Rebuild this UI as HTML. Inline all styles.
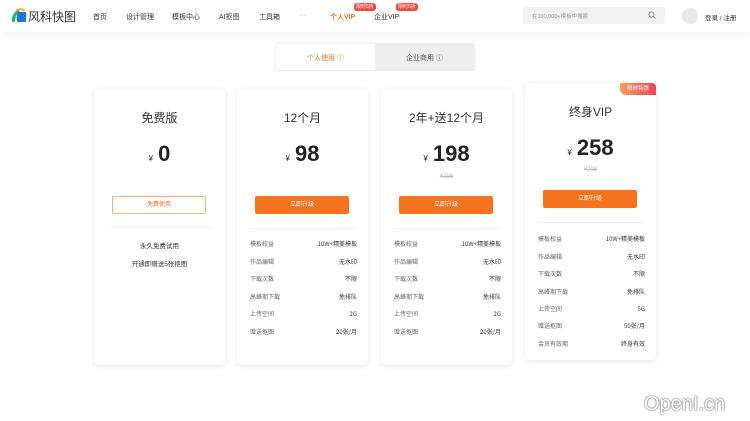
<!DOCTYPE html>
<html><head><meta charset="utf-8"><style>
*{margin:0;padding:0;box-sizing:border-box}
body{width:750px;height:421px;background:#fff;font-family:"Liberation Sans","Noto Sans CJK SC",sans-serif;position:relative;overflow:hidden;color:#333}
.a{position:absolute}
.hdr{left:0;top:0;width:750px;height:32px;background:#fff;box-shadow:0 2px 6px rgba(0,0,0,.06)}
.nav{font-size:7px;color:#333;top:12px}
.tag{font-size:5px;color:#fff;background:#f04a3a;border-radius:3px;padding:0 2px;height:8px;line-height:8px;top:3px}
.card{background:#fff;border-radius:4px;box-shadow:0 1px 6px rgba(0,0,0,.1);width:131px}
.t{width:131px;text-align:center;font-size:12px;color:#333}
.p{width:131px;text-align:center;font-size:22px;font-weight:bold;color:#222}
.p small{font-size:8px;font-weight:normal;margin-right:5px}
.s{width:131px;text-align:center;font-size:6px;color:#bbb;text-decoration:line-through}
.btn{width:94px;height:18px;background:#f5731e;color:#fff;font-size:6px;text-align:center;line-height:18px;border-radius:2px;left:18px}
.sep{left:12px;width:107px;height:1px;background:#f0f0f0}
.row{left:13px;width:107px;height:10px;font-size:6px;line-height:10px;color:#666}
.row span{position:absolute;left:0;top:0;font-family:"Noto Sans CJK SC",sans-serif}
.row b{position:absolute;right:0;top:0;font-weight:normal;color:#333;font-family:"Noto Sans CJK SC",sans-serif}
</style></head><body>
<div class="a hdr"></div>
<svg class="a" style="left:9px;top:7px" width="18" height="16" viewBox="0 0 18 16"><path d="M3 15 Q2 7 9 3 L11 4 Q6 8 6 15Z" fill="#2fb36b"/><path d="M9 5 L17 5 L17 15 L8 15 Q7 9 9 5Z" fill="#1f7ad6"/><path d="M6 3 Q10 0 16 2 L15 4 Q11 2 8 4Z" fill="#f5a623"/></svg>
<div class="a" style="left:28px;top:8px;font-size:12px;color:#333">风科快图</div>
<div class="a nav" style="left:93px">首页</div>
<div class="a nav" style="left:126px">设计管理</div>
<div class="a nav" style="left:172px">模板中心</div>
<div class="a nav" style="left:219px">AI抠图</div>
<div class="a nav" style="left:259px">工具箱</div>
<div class="a nav" style="left:299px;color:#888">···</div>
<div class="a nav" style="left:330px;color:#f5731e;font-weight:bold">个人VIP</div>
<div class="a nav" style="left:374px">企业VIP</div>
<div class="a tag" style="left:354px">限时5折</div>
<div class="a tag" style="left:396px">限时5折</div>
<div class="a" style="left:523px;top:7px;width:142px;height:17px;background:#f2f2f2;border-radius:2px"></div>
<div class="a" style="left:532px;top:12px;font-size:5.5px;color:#999">在100,000+模板中搜索</div>
<svg class="a" style="left:648px;top:11px" width="8" height="8" viewBox="0 0 8 8"><circle cx="3.5" cy="3.5" r="2.6" fill="none" stroke="#777" stroke-width=".8"/><path d="M5.5 5.5 L7.5 7.5" stroke="#777" stroke-width=".8"/></svg>
<div class="a" style="left:682px;top:8px;width:16px;height:16px;border-radius:50%;background:#e9e9e9"></div>
<div class="a" style="left:705px;top:12px;font-size:6.5px;color:#333">登录 / 注册</div>
<div class="a" style="left:275px;top:43px;width:200px;height:28px;background:#eee;border-radius:2px"></div>
<div class="a" style="left:276px;top:44px;width:99px;height:26px;background:#fff"></div>
<div class="a" style="left:276px;top:53px;width:99px;text-align:center;font-size:7px;color:#f5731e">个人使用 ⓘ</div>
<div class="a" style="left:375px;top:53px;width:99px;text-align:center;font-size:7px;color:#555">企业商用 ⓘ</div>

<div class="a card" style="left:94px;top:89px;height:276px"></div>
<div class="a t" style="left:94px;top:109px">免费版</div>
<div class="a p" style="left:94px;top:141px"><small>¥</small>0</div>
<div class="a btn" style="left:112px;top:196px;background:#fff;color:#f5731e;border:1px solid #f5b07f;line-height:16px">免费使用</div>
<div class="a sep" style="left:106px;top:227px"></div>
<div class="a" style="left:94px;top:240px;width:131px;text-align:center;font-size:6.5px;color:#333">永久免费试用</div>
<div class="a" style="left:94px;top:258px;width:131px;text-align:center;font-size:6.5px;color:#333">开通即赠送5张抠图</div>

<div class="a card" style="left:237px;top:89px;height:276px"></div>
<div class="a t" style="left:237px;top:109px">12个月</div>
<div class="a p" style="left:237px;top:141px"><small>¥</small>98</div>
<div class="a btn" style="left:255px;top:196px">立即升级</div>
<div class="a sep" style="left:249px;top:228px"></div>
<div class="a row" style="left:250px;top:239px"><span>模板权益</span><b>10W+精美模板</b></div>
<div class="a row" style="left:250px;top:257px"><span>作品编辑</span><b>无水印</b></div>
<div class="a row" style="left:250px;top:274px"><span>下载次数</span><b>不限</b></div>
<div class="a row" style="left:250px;top:292px"><span>高峰期下载</span><b>免排队</b></div>
<div class="a row" style="left:250px;top:309px"><span>上传空间</span><b>2G</b></div>
<div class="a row" style="left:250px;top:327px"><span>赠送抠图</span><b>20张/月</b></div>

<div class="a card" style="left:381px;top:89px;height:276px"></div>
<div class="a t" style="left:381px;top:109px">2年+送12个月</div>
<div class="a p" style="left:381px;top:141px"><small>¥</small>198</div>
<div class="a s" style="left:381px;top:174px">¥298</div>
<div class="a btn" style="left:399px;top:196px">立即升级</div>
<div class="a sep" style="left:393px;top:228px"></div>
<div class="a row" style="left:394px;top:239px"><span>模板权益</span><b>10W+精美模板</b></div>
<div class="a row" style="left:394px;top:257px"><span>作品编辑</span><b>无水印</b></div>
<div class="a row" style="left:394px;top:274px"><span>下载次数</span><b>不限</b></div>
<div class="a row" style="left:394px;top:292px"><span>高峰期下载</span><b>免排队</b></div>
<div class="a row" style="left:394px;top:309px"><span>上传空间</span><b>2G</b></div>
<div class="a row" style="left:394px;top:327px"><span>赠送抠图</span><b>20张/月</b></div>

<div class="a card" style="left:525px;top:83px;height:277px"></div>
<div class="a" style="left:620px;top:83px;width:36px;height:12px;background:linear-gradient(90deg,#f5a05a,#f0435a);border-radius:0 4px 0 6px;color:#fff;font-size:5.5px;text-align:center;line-height:12px">限时特惠</div>
<div class="a t" style="left:525px;top:103px">终身VIP</div>
<div class="a p" style="left:525px;top:135px"><small>¥</small>258</div>
<div class="a s" style="left:525px;top:167px">¥798</div>
<div class="a btn" style="left:543px;top:190px">立即升级</div>
<div class="a sep" style="left:537px;top:222px"></div>
<div class="a row" style="left:538px;top:234px"><span>模板权益</span><b>10W+精美模板</b></div>
<div class="a row" style="left:538px;top:252px"><span>作品编辑</span><b>无水印</b></div>
<div class="a row" style="left:538px;top:269px"><span>下载次数</span><b>不限</b></div>
<div class="a row" style="left:538px;top:287px"><span>高峰期下载</span><b>免排队</b></div>
<div class="a row" style="left:538px;top:304px"><span>上传空间</span><b>5G</b></div>
<div class="a row" style="left:538px;top:321px"><span>赠送抠图</span><b>50张/月</b></div>
<div class="a row" style="left:538px;top:339px"><span>会员有效期</span><b>终身有效</b></div>

<div class="a" style="left:644px;top:393px;font-size:20px;color:#fff;text-shadow:0 0 2px #666,0 0 1px #444">OpenI.cn</div>
</body></html>
